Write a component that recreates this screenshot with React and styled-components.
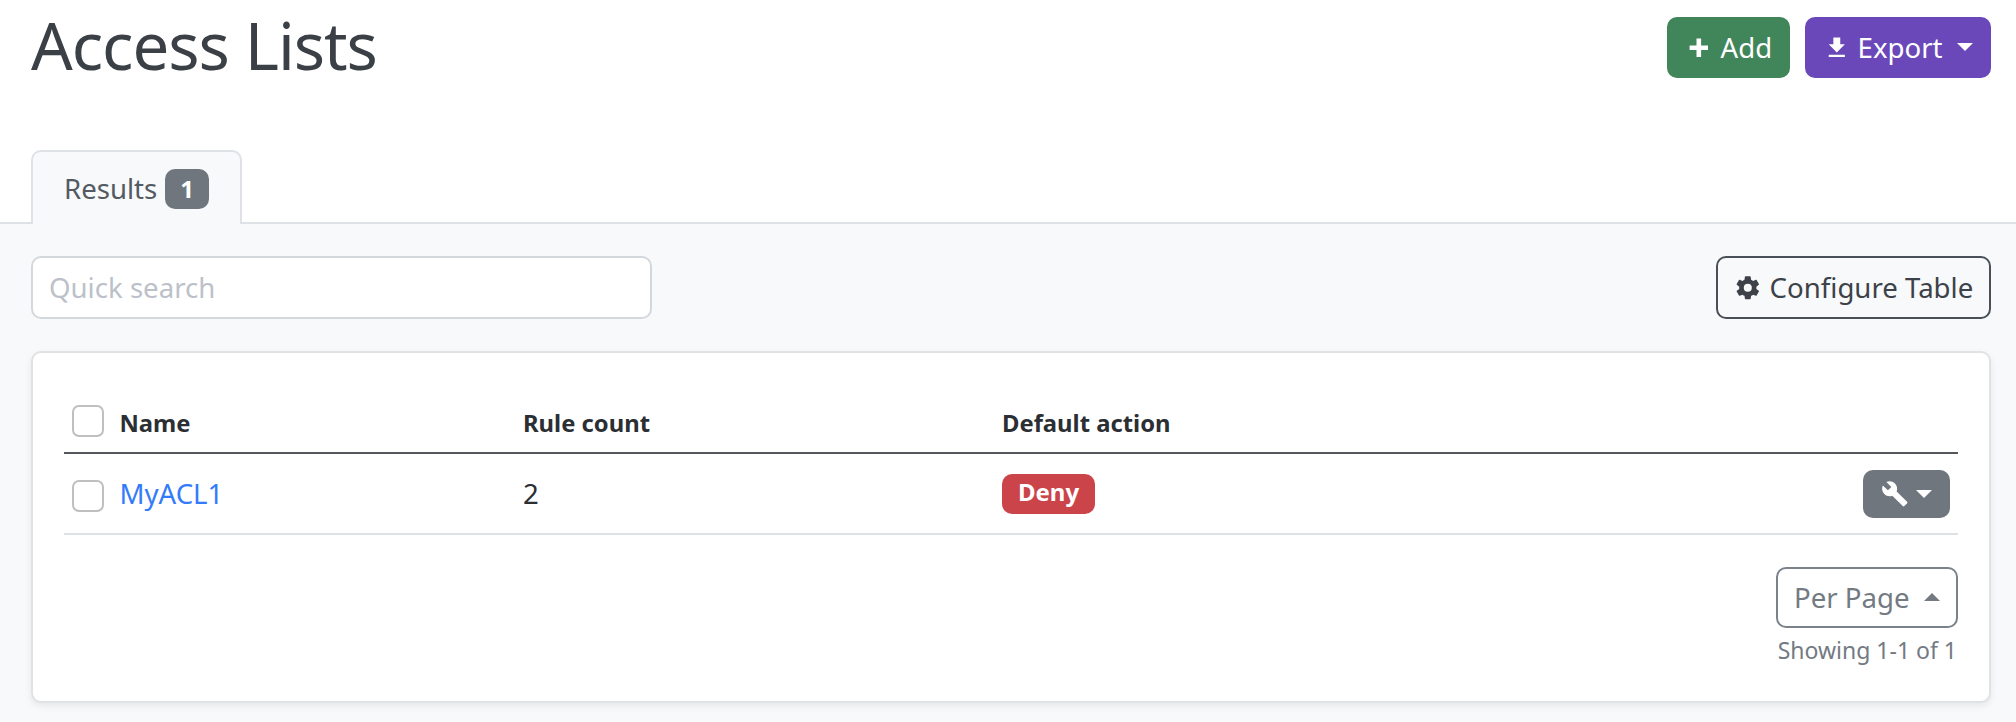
import React from 'react';
import styled, { createGlobalStyle } from 'styled-components';

const Global = createGlobalStyle`
  *, *::before, *::after { box-sizing: border-box; }
  body {
    margin: 0;
    background: #fff;
    color: #2b2f34;
    font-family: "Noto Sans", "Liberation Sans", sans-serif;
    font-size: 27.6px;
    line-height: 39px;
  }
`;

const Page = styled.div`
  height: 722px;
  overflow: hidden;
  display: flex;
  flex-direction: column;
`;

const Header = styled.header`
  display: flex;
  justify-content: space-between;
  align-items: flex-start;
  height: 150px;
  padding: 17px 25px 0 31px;
`;

const Title = styled.h1`
  margin: -11px 0 0;
  font-size: 65.4px;
  line-height: 78px;
  font-weight: 400;
  letter-spacing: -1.05px;
  color: #3a4046;
`;

const Actions = styled.div`
  display: flex;
  gap: 15px;
`;

const palette = {
  green: ['#41865a', '#fff', '#41865a'],
  purple: ['#6a48b9', '#fff', '#6a48b9'],
  dark: ['transparent', '#3c4248', '#495057'],
  muted: ['transparent', '#737a82', '#7b828a'],
  gray: ['#6f767e', '#fff', '#6f767e'],
};

const Button = styled.button`
  display: flex;
  align-items: center;
  gap: ${(p) => p.$gap || 7}px;
  width: ${(p) => p.$w}px;
  height: ${(p) => p.$h || 61}px;
  padding: 0 16px;
  border: 2px solid ${(p) => palette[p.$tone][2]};
  border-radius: 10px;
  background: ${(p) => palette[p.$tone][0]};
  color: ${(p) => palette[p.$tone][1]};
  font: inherit;
  white-space: nowrap;
`;

const Icon = styled.svg`
  width: 1em;
  height: 1em;
  margin-top: ${(p) => p.$drop || 0}px;
  flex: none;
  fill: currentColor;
`;

const Caret = styled.span`
  width: 0;
  height: 0;
  margin-left: auto;
  margin-bottom: ${(p) => p.$lift || 0}px;
  border: 8px solid transparent;
  border-bottom-width: ${(p) => (p.$up ? 8 : 0)}px;
  border-top-width: ${(p) => (p.$up ? 0 : 8)}px;
  border-${(p) => (p.$up ? 'bottom' : 'top')}-color: currentColor;
`;

const Tabs = styled.nav`
  display: flex;
  height: 74px;
  padding-left: 31px;
  border-bottom: 2px solid #dee2e6;
`;

const Tab = styled.div`
  display: flex;
  align-items: center;
  justify-content: space-between;
  width: 211px;
  height: 75px;
  padding: 1px 31px 0;
  border: 2px solid #dee2e6;
  border-bottom: 0;
  border-radius: 10px 10px 0 0;
  background: #f8f9fb;
  color: #545a61;
`;

const TabLabel = styled.span`
  padding-bottom: 2px;
`;

const Badge = styled.span`
  display: flex;
  align-items: center;
  justify-content: center;
  width: ${(p) => p.$w}px;
  height: 40px;
  padding-bottom: ${(p) => p.$lift || 0}px;
  border-radius: 10px;
  background: ${(p) => p.$bg};
  color: #fff;
  font-size: 24px;
  font-weight: 700;
  line-height: 24px;
`;

const Content = styled.main`
  flex: 1;
  padding: 32px 25px 0 31px;
  background: #f8f9fb;
`;

const Controls = styled.div`
  display: flex;
  justify-content: space-between;
  margin-bottom: 32px;
`;

const Search = styled.input`
  width: 621px;
  height: 63px;
  padding: 0 15px 2px 16px;
  border: 2px solid #d3d8dd;
  border-radius: 10px;
  background: #fff;
  font: inherit;
  &::placeholder { color: #bcc1c9; opacity: 1; }
`;

const Card = styled.section`
  height: 352px;
  padding: 34px 31px 0;
  border: 2px solid #e1e2e4;
  border-radius: 10px;
  background: #fff;
  box-shadow: 0 3px 7px rgba(0, 0, 0, 0.075);
`;

const Row = styled.div`
  display: grid;
  grid-template-columns: 55.5px 403.5px 479px 1fr auto;
  align-items: center;
  height: ${(p) => (p.$head ? 67 : 81)}px;
  padding-right: 8px;
  border-bottom: 2px solid ${(p) => (p.$head ? '#54585d' : '#dee2e6')};
`;

const HeadCell = styled.span`
  padding-top: 7px;
  font-size: 23.8px;
  font-weight: 700;
`;

const Cell = styled.span`
  margin-top: -1px;
`;

const Checkbox = styled.input`
  appearance: none;
  width: 32px;
  height: 32px;
  margin: ${(p) => p.$shift || 0}px 0 0 8px;
  border: 2px solid #bfbfbf;
  border-radius: 7px;
  background: #fff;
`;

const Link = styled.a`
  color: #337bfa;
  text-decoration: none;
`;

const Pager = styled.footer`
  display: flex;
  flex-direction: column;
  align-items: flex-end;
  padding-top: 32px;
`;

const Count = styled.small`
  margin: 5px 1px 0 0;
  font-size: 23px;
  line-height: 35px;
  color: #737a82;
`;

const PATHS = {
  plus: 'M20 14H14V20H10V14H4V10H10V4H14V10H20V14Z',
  download: 'M5,20H19V18H5M19,9H15V3H9V9H5L12,16L19,9Z',
  cog: 'M12,15.5A3.5,3.5 0 0,1 8.5,12A3.5,3.5 0 0,1 12,8.5A3.5,3.5 0 0,1 15.5,12A3.5,3.5 0 0,1 12,15.5M19.43,12.97C19.47,12.65 19.5,12.33 19.5,12C19.5,11.67 19.47,11.34 19.43,11L21.54,9.37C21.73,9.22 21.78,8.95 21.66,8.73L19.66,5.27C19.54,5.05 19.27,4.96 19.05,5.05L16.56,6.05C16.04,5.66 15.5,5.32 14.87,5.07L14.5,2.42C14.46,2.18 14.25,2 14,2H10C9.75,2 9.54,2.18 9.5,2.42L9.13,5.07C8.5,5.32 7.96,5.66 7.44,6.05L4.95,5.05C4.73,4.96 4.46,5.05 4.34,5.27L2.34,8.73C2.21,8.95 2.27,9.22 2.46,9.37L4.57,11C4.53,11.34 4.5,11.67 4.5,12C4.5,12.33 4.53,12.65 4.57,12.97L2.46,14.63C2.27,14.78 2.21,15.05 2.34,15.27L4.34,18.73C4.46,18.95 4.73,19.03 4.95,18.95L7.44,17.94C7.96,18.34 8.5,18.68 9.13,18.93L9.5,21.58C9.54,21.82 9.75,22 10,22H14C14.25,22 14.46,21.82 14.5,21.58L14.87,18.93C15.5,18.67 16.04,18.34 16.56,17.94L19.05,18.95C19.27,19.03 19.54,18.95 19.66,18.73L21.66,15.27C21.78,15.05 21.73,14.78 21.54,14.63L19.43,12.97Z',
  wrench: 'M22.7,19L13.6,9.9C14.5,7.6 14,4.9 12.1,3C10.1,1 7.1,0.6 4.7,1.7L9,6L6,9L1.6,4.7C0.4,7.1 0.9,10.1 2.9,12.1C4.8,14 7.5,14.5 9.8,13.6L18.9,22.7C19.3,23.1 19.9,23.1 20.3,22.7L22.6,20.4C23.1,20 23.1,19.3 22.7,19Z',
};

const Glyph = ({ name, drop }) => (
  <Icon viewBox="0 0 24 24" $drop={drop} aria-hidden="true"><path d={PATHS[name]} /></Icon>
);

export default function App() {
  return (
    <Page>
      <Global />
      <Header>
        <Title>Access Lists</Title>
        <Actions>
          <Button $tone="green" $w={123} $gap={8}><Glyph name="plus" drop={1} />Add</Button>
          <Button $tone="purple" $w={186}><Glyph name="download" drop={1} />Export<Caret $lift={2} /></Button>
        </Actions>
      </Header>
      <Tabs>
        <Tab><TabLabel>Results</TabLabel><Badge $w={44} $bg="#6f767e">1</Badge></Tab>
      </Tabs>
      <Content>
        <Controls>
          <Search placeholder="Quick search" />
          <Button $tone="dark" $w={275} $h={63} $gap={8}><Glyph name="cog" drop={1} />Configure Table</Button>
        </Controls>
        <Card>
          <Row $head>
            <Checkbox type="checkbox" $shift={2} />
            <HeadCell>Name</HeadCell>
            <HeadCell>Rule count</HeadCell>
            <HeadCell>Default action</HeadCell>
          </Row>
          <Row>
            <Checkbox type="checkbox" $shift={4} />
            <Cell><Link href="#">MyACL1</Link></Cell>
            <Cell>2</Cell>
            <Badge $w={93} $bg="#cb444a" $lift={3}>Deny</Badge>
            <Button $tone="gray" $w={87} $h={48}><Glyph name="wrench" /><Caret /></Button>
          </Row>
          <Pager>
            <Button $tone="muted" $w={182}>Per Page<Caret $up $lift={1} /></Button>
            <Count>Showing 1-1 of 1</Count>
          </Pager>
        </Card>
      </Content>
    </Page>
  );
}
